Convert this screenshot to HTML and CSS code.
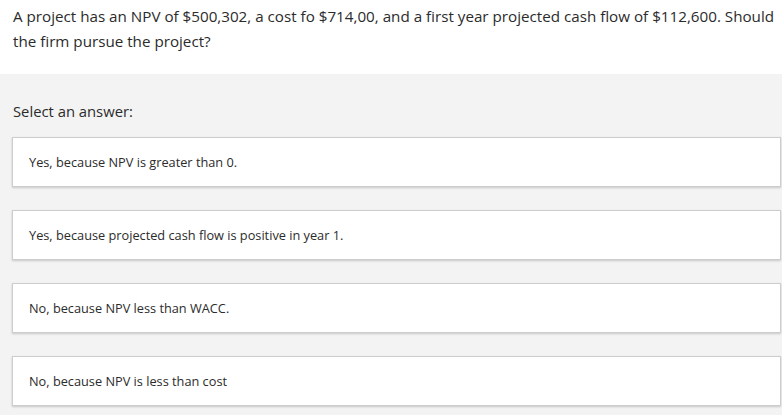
FILE: index.html
```html
<!DOCTYPE html>
<html lang="en">
<head>
<meta charset="utf-8">
<title>Question</title>
<link rel="stylesheet" href="styles.css">
</head>
<body>
<div class="question">
  <p class="question-text">A project has an NPV of $500,302, a cost fo $714,00, and a first year projected cash flow of $112,600. Should the firm pursue the project?</p>
</div>
<div class="answers">
  <div class="prompt">Select an answer:</div>
  <div class="choices">
    <div class="choice">Yes, because NPV is greater than 0.</div>
    <div class="choice">Yes, because projected cash flow is positive in year 1.</div>
    <div class="choice">No, because NPV less than WACC.</div>
    <div class="choice">No, because NPV is less than cost</div>
  </div>
</div>
</body>
</html>
```
FILE: styles.css
```css
html, body {
  margin: 0;
  padding: 0;
  background: #f3f3f3;
}
body {
  font-family: "Open Sans", "Noto Sans", sans-serif;
  color: #2b2b2b;
}
.question {
  background: #ffffff;
  height: 74px;
  box-sizing: border-box;
  padding: 4px 2px 0 13px;
}
.question-text {
  margin: 0;
  font-size: 15.2px;
  line-height: 25px;
}
.answers {
  padding: 27px 1px 9px 12px;
}
.prompt {
  font-size: 14.8px;
  line-height: 20px;
  padding-left: 1px;
  margin-bottom: 16px;
}
.choices {
  display: flex;
  flex-direction: column;
  gap: 23px;
}
.choice {
  height: 50px;
  box-sizing: border-box;
  background: #ffffff;
  border: 1px solid #cdcdcd;
  box-shadow: 0 1px 2px rgba(0,0,0,0.18);
  display: flex;
  align-items: center;
  padding-left: 16px;
  font-size: 12.75px;
}
```
